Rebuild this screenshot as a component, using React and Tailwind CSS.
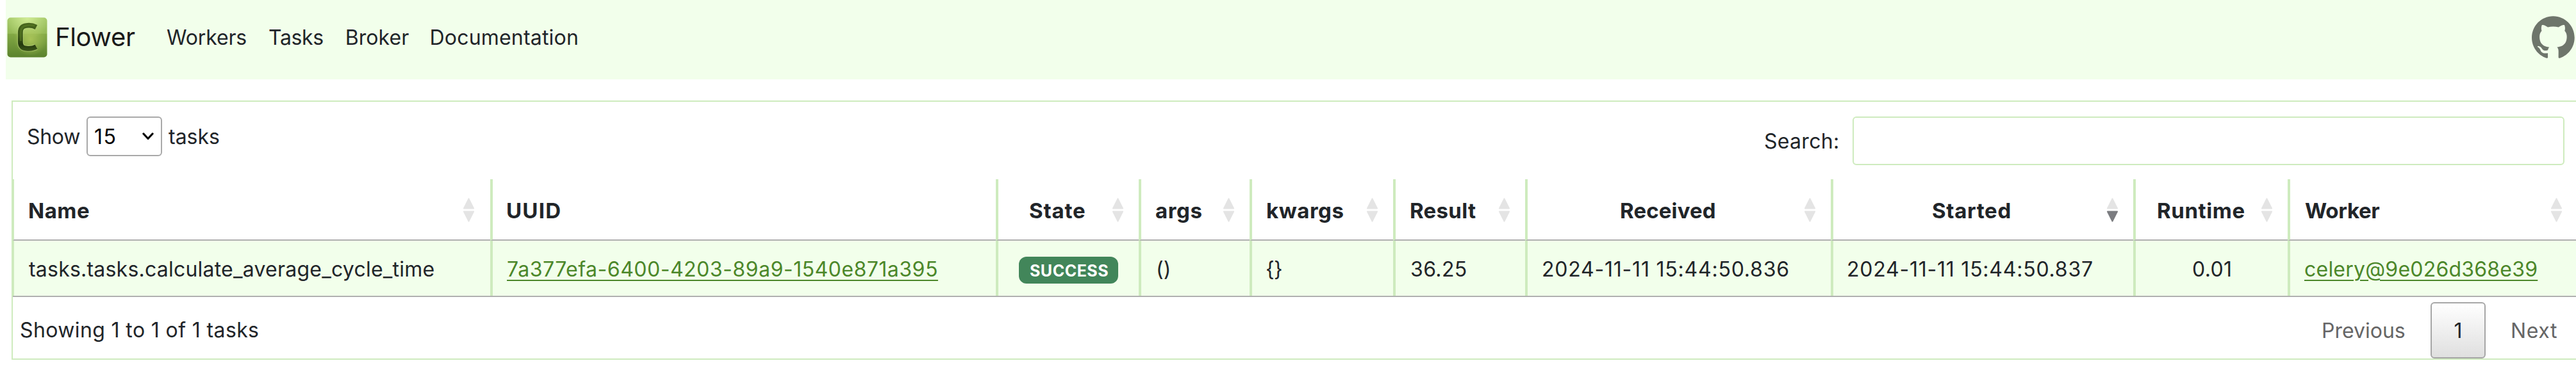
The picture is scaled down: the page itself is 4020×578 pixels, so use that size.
const navItems = [
  { label: 'Workers', cls: 'ml-[50px] tracking-[-0.15px]' },
  { label: 'Tasks', cls: 'ml-[34px] tracking-[-0.4px]' },
  { label: 'Broker', cls: 'ml-[34px] tracking-[0.1px]' },
  { label: 'Documentation', cls: 'ml-8 tracking-[0.2px]' },
];

const task = {
  name: 'tasks.tasks.calculate_average_cycle_time',
  uuid: '7a377efa-6400-4203-89a9-1540e871a395',
  state: 'SUCCESS',
  args: '()',
  kwargs: '{}',
  result: '36.25',
  received: '2024-11-11 15:44:50.836',
  started: '2024-11-11 15:44:50.837',
  runtime: '0.01',
  worker: 'celery@9e026d368e39',
};

const columns = [
  { key: 'name', label: 'Name', col: 'w-[745px]', line: 'border-l-2', head: 'pl-[22px] pr-[25px] tracking-[0.5px]', cell: 'pl-[23px] tracking-[0.22px]' },
  { key: 'uuid', label: 'UUID', col: 'w-[789px]', line: 'border-l-4', head: 'pl-[21px] pr-6 tracking-[1.2px]', cell: 'pl-[22px] tracking-[0.5px]', fixedOrder: true },
  { key: 'state', label: 'State', col: 'w-[223px]', line: 'border-l-4', head: 'pl-12 pr-6 tracking-[0.8px]', cell: 'pl-8' },
  { key: 'args', label: 'args', col: 'w-[173px]', line: 'border-l-4', head: 'pl-[22px] pr-6 tracking-[0.6px]', cell: 'pl-[23px]' },
  { key: 'kwargs', label: 'kwargs', col: 'w-[224px]', line: 'border-l-4', head: 'pl-[22px] pr-6 tracking-[0.55px]', cell: 'pl-[21px] tracking-[-0.6px]' },
  { key: 'result', label: 'Result', col: 'w-[206px]', line: 'border-l-4', head: 'pl-[22px] pr-6 tracking-[0.3px]', cell: 'pl-[23px] tracking-[0.4px]' },
  { key: 'received', label: 'Received', col: 'w-[477px]', line: 'border-l-4', head: 'pl-[144px] pr-6 tracking-[0.15px]', cell: 'pl-[22px] tracking-[0.78px]' },
  { key: 'started', label: 'Started', col: 'w-[472px]', line: 'border-l-4', head: 'pl-[154px] pr-6 tracking-[0.65px]', cell: 'pl-[21px] tracking-[0.77px]', sorted: true },
  { key: 'runtime', label: 'Runtime', col: 'w-[241px]', line: 'border-l-4', head: 'pl-[33px] pr-6 tracking-[0.6px]', cell: 'pl-[88px] tracking-[0.34px]' },
  { key: 'worker', label: 'Worker', col: 'w-[450px]', line: 'border-l-4', head: 'pl-[23px] pr-[22px] tracking-[-0.3px]', cell: 'pl-[22px] tracking-[0.22px]' },
];

const stalkPath = 'M45.5 15.5C40 12.6 35 12.3 30 13C23.5 13.8 20.8 17 20.8 24V38C20.8 45 23.5 48 30 48.6C35 49.2 40 49.2 45.5 46.2';

function CeleryLogo() {
  return (
    <svg className="h-[63px] w-[63px] shrink-0" viewBox="0 0 63 63" fill="none">
      <defs>
        <linearGradient id="tile" x1="0" y1="0" x2="0" y2="1">
          <stop offset="0" stopColor="#a2c765" />
          <stop offset="0.4" stopColor="#94b956" />
          <stop offset="0.41" stopColor="#83a945" />
          <stop offset="1" stopColor="#5b822d" />
        </linearGradient>
        <radialGradient id="topGlow" cx="0.5" cy="0" r="0.55">
          <stop offset="0" stopColor="#d6f09a" stopOpacity="0.9" />
          <stop offset="1" stopColor="#d6f09a" stopOpacity="0" />
        </radialGradient>
        <radialGradient id="midGlow" cx="0.58" cy="0.55" r="0.42">
          <stop offset="0" stopColor="#adc75a" stopOpacity="0.9" />
          <stop offset="1" stopColor="#adc75a" stopOpacity="0" />
        </radialGradient>
        <linearGradient id="stalk" x1="0" y1="8" x2="0" y2="54" gradientUnits="userSpaceOnUse">
          <stop offset="0" stopColor="#47651c" />
          <stop offset="0.45" stopColor="#3c5a18" />
          <stop offset="0.75" stopColor="#24390e" />
          <stop offset="1" stopColor="#3f5c1b" />
        </linearGradient>
      </defs>
      <rect x="0.5" y="0.5" width="62" height="62" rx="5" fill="url(#tile)" />
      <rect x="0.5" y="0.5" width="62" height="62" rx="5" fill="url(#topGlow)" />
      <rect x="0.5" y="0.5" width="62" height="62" rx="5" fill="url(#midGlow)" />
      <path d={stalkPath} stroke="#c4dc86" strokeOpacity="0.5" strokeWidth="10" />
      <path d={stalkPath} stroke="url(#stalk)" strokeWidth="7.8" />
      <path d="M43 13.3C38 11.8 34 12 30 12.8C24 13.8 21.4 17 21.4 24V37" stroke="#5a7c26" strokeOpacity="0.6" strokeWidth="3" />
    </svg>
  );
}

function GithubMark() {
  return (
    <svg className="h-[66px] w-[67px] shrink-0 fill-[#6e756b]" viewBox="0 0 98 96">
      <path
        fillRule="evenodd"
        clipRule="evenodd"
        d="M48.854 0C21.839 0 0 22 0 49.217c0 21.756 13.993 40.172 33.405 46.69 2.427.49 3.316-1.059 3.316-2.362 0-1.141-.08-5.052-.08-9.127-13.59 2.934-16.42-5.867-16.42-5.867-2.184-5.704-5.42-7.17-5.42-7.17-4.448-3.015.324-3.015.324-3.015 4.934.326 7.523 5.052 7.523 5.052 4.367 7.496 11.404 5.378 14.235 4.074.404-3.178 1.699-5.378 3.074-6.6-10.839-1.141-22.243-5.378-22.243-24.283 0-5.378 1.94-9.778 5.014-13.2-.485-1.222-2.184-6.275.486-13.038 0 0 4.125-1.304 13.426 5.052a46.97 46.97 0 0 1 12.214-1.63c4.125 0 8.33.571 12.213 1.63 9.302-6.356 13.427-5.052 13.427-5.052 2.67 6.763.97 11.816.485 13.038 3.155 3.422 5.015 7.822 5.015 13.2 0 18.905-11.404 23.06-22.324 24.283 1.78 1.548 3.316 4.481 3.316 9.126 0 6.6-.08 11.897-.08 13.526 0 1.304.89 2.853 3.316 2.364 19.412-6.52 33.405-24.935 33.405-46.691C97.707 22 75.788 0 48.854 0z"
      />
    </svg>
  );
}

function SortIcon({ desc }) {
  return (
    <svg className="mt-1 h-[38px] w-[17px] shrink-0 stroke-2" viewBox="0 0 17 38" strokeLinejoin="round">
      <path className="fill-[#e4e4e4] stroke-[#e4e4e4]" d="M8.5 1.5L16 16.5H1Z" />
      <path
        className={desc ? 'fill-[#7b7c80] stroke-[#7b7c80]' : 'fill-[#e4e4e4] stroke-[#e4e4e4]'}
        d="M8.5 36.5L16 21.5H1Z"
      />
    </svg>
  );
}

function CellValue({ name }) {
  if (name === 'state') {
    return (
      <span className="mt-1 flex h-[42px] w-[155px] items-center rounded-xl bg-[#42865a] pt-0.5 pl-[17px] text-[25px] leading-none font-bold tracking-[0.5px] text-white">
        {task.state}
      </span>
    );
  }
  if (name === 'uuid' || name === 'worker') {
    return (
      <a className="text-[#4c872a] underline decoration-2 underline-offset-[5px]" href="#">
        {task[name]}
      </a>
    );
  }
  return task[name];
}

export default function App() {
  return (
    <div className="h-[578px] w-[4020px] overflow-hidden bg-white pl-[9px] font-['Inter',sans-serif] text-[32px] leading-[48px] whitespace-nowrap text-[#212529]">
      <nav className="flex h-[124px] items-center bg-[#f2ffeb] pr-0.5 pb-2 pl-0.5">
        <CeleryLogo />
        <a className="-mt-px ml-3 w-[125px] text-[40px] leading-[60px] tracking-[-0.4px] text-[#1a1a1a]">Flower</a>
        <div className="-ml-px flex grow pt-0.5">
          {navItems.map((item) => (
            <a key={item.label} className={item.cls}>
              {item.label}
            </a>
          ))}
        </div>
        <GithubMark />
      </nav>

      <section className="mt-[33px] ml-[9px] h-[405px] border-y-2 border-l-2 border-[#ceebbe]">
        <div className="flex h-[121px] items-start justify-between pt-[23px] pr-[18px] pl-[22px]">
          <label className="flex items-center">
            <span className="w-[93px] pt-0.5 tracking-[-0.3px]">Show</span>
            <span className="flex h-[62px] w-[118px] items-center justify-between rounded-md border-2 border-[#a9a9a9] pr-[11px] pl-2.5 text-black">
              <span className="pt-0.5 tracking-[1.4px]">15</span>
              <svg className="h-3 w-[18px] fill-none stroke-black stroke-[3.2]" viewBox="0 0 18 12" strokeLinecap="round" strokeLinejoin="round">
                <path d="M2 2L9 9.5L16 2" />
              </svg>
            </span>
            <span className="ml-2.5 pt-0.5">tasks</span>
          </label>
          <label className="flex items-center">
            <span className="w-[138px] pt-0.5 tracking-[0.3px]">Search:</span>
            <input className="h-[76px] w-[1111px] rounded-md border-2 border-[#ceebbe] px-2.5 outline-none" />
          </label>
        </div>

        <table className="w-[4000px] table-fixed border-separate border-spacing-0 border-b-2 border-[#b0b0b0] text-left">
          <colgroup>
            {columns.map((c) => (
              <col key={c.key} className={c.col} />
            ))}
          </colgroup>
          <thead>
            <tr>
              {columns.map((c) => (
                <th key={c.key} className={`h-24 border-b-2 border-l-[#ceebbe] border-b-[#b0b0b0] p-0 align-top text-[33px] font-bold ${c.line}`}>
                  <div className={`flex justify-between pt-[25px] leading-[48px] ${c.head}`}>
                    {c.label}
                    {!c.fixedOrder && <SortIcon desc={c.sorted} />}
                  </div>
                </th>
              ))}
            </tr>
          </thead>
          <tbody>
            <tr className="bg-[#f2ffeb]">
              {columns.map((c) => (
                <td key={c.key} className={`h-[86px] border-[#ceebbe] p-0 align-top ${c.line}`}>
                  <div className={`pt-[21px] ${c.cell}`}>
                    <CellValue name={c.key} />
                  </div>
                </td>
              ))}
            </tr>
          </tbody>
        </table>

        <footer className="flex h-24 items-start justify-between pr-[29px] pl-[11px]">
          <span className="pt-7 tracking-[0.38px]">Showing 1 to 1 of 1 tasks</span>
          <div className="flex items-center pt-2 text-[#666]">
            <a className="w-[170px] pt-0.5">Previous</a>
            <a className="flex h-[88px] w-[86px] items-center justify-center rounded-md border-2 border-[#a6a6a6] bg-linear-to-b from-white to-[#dfdfdf] pt-0.5 text-[#212529]">
              1
            </a>
            <a className="ml-[39px] pt-0.5 tracking-[0.6px]">Next</a>
          </div>
        </footer>
      </section>
    </div>
  );
}
